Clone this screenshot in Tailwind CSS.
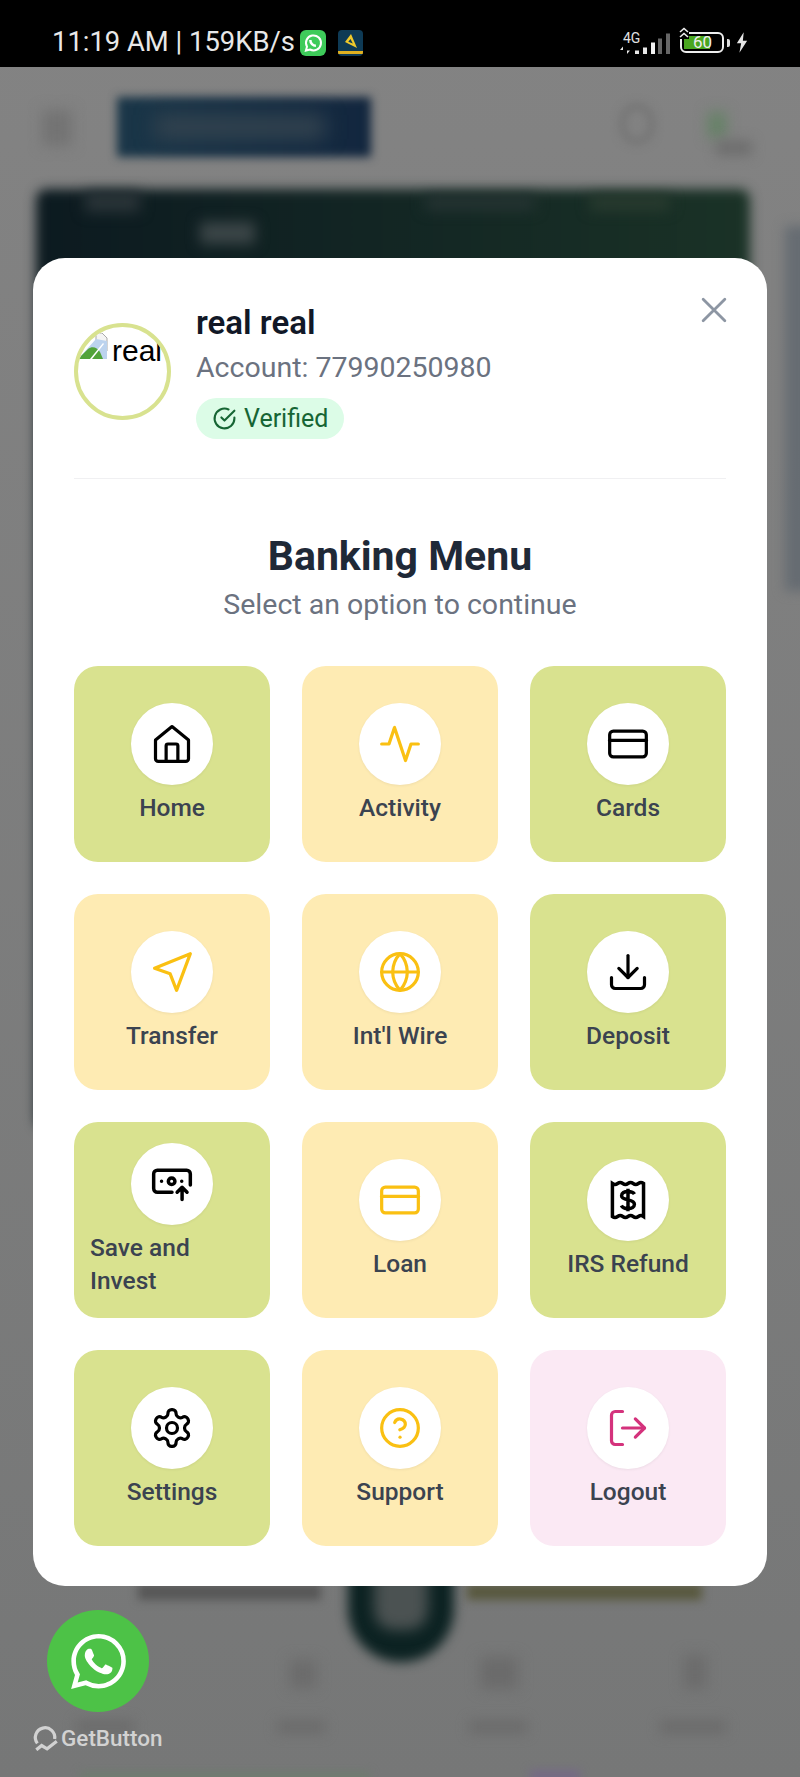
<!DOCTYPE html>
<html lang="en">
<head>
    <meta charset="UTF-8">
    <meta name="viewport" content="width=device-width, initial-scale=1.0">
    <title>Banking Menu</title>
    <script src="https://cdn.jsdelivr.net/npm/@tailwindcss/browser@4"></script>
</head>
<body class="bg-[#808080] font-['Roboto',sans-serif]">
<div class="relative w-[800px] h-[1777px] overflow-hidden bg-gradient-to-b from-[#838383] to-[#767777]">

    <!-- Blurred page behind the modal -->
    <div class="absolute left-[42px] top-[110px] w-[30px] h-[36px] bg-[#737373] blur-[7px]"></div>
    <div class="absolute left-[117px] top-[97px] w-[254px] h-[60px] bg-gradient-to-r from-[#1a3648] to-[#12263e] blur-[5px]"></div>
    <div class="absolute left-[155px] top-[115px] w-[170px] h-[24px] bg-[#33434f] blur-[10px]"></div>
    <div class="absolute left-[620px] top-[104px] w-[34px] h-[40px] rounded-full border-[5px] border-[#707070] blur-[5px]"></div>
    <div class="absolute left-[708px] top-[112px] w-[18px] h-[26px] bg-[#658266] blur-[7px]"></div>
    <div class="absolute left-[716px] top-[140px] w-[36px] h-[16px] bg-[#6f6f6f] blur-[6px]"></div>
    <div class="absolute left-[36px] top-[189px] w-[714px] h-[940px] rounded-[10px] bg-gradient-to-r from-[#0c1a20] to-[#1a3226] blur-[6px]"></div>
    <div class="absolute left-[85px] top-[192px] w-[55px] h-[20px] bg-[#2a3438] blur-[7px]"></div>
    <div class="absolute left-[200px] top-[222px] w-[55px] h-[22px] bg-[#3c4648] blur-[7px]"></div>
    <div class="absolute left-[425px] top-[196px] w-[110px] h-[14px] bg-[#263433] blur-[7px]"></div>
    <div class="absolute left-[590px] top-[196px] w-[80px] h-[14px] bg-[#2a3c30] blur-[7px]"></div>
    <div class="absolute left-[785px] top-[226px] w-[30px] h-[365px] bg-[#666c72] blur-[6px]"></div>
    <div class="absolute left-[348px] top-[1500px] w-[106px] h-[162px] rounded-full bg-[#0c2222] blur-[6px]"></div>
    <div class="absolute left-[374px] top-[1560px] w-[54px] h-[70px] rounded-[20px] bg-[#4b5252] blur-[7px]"></div>
    <div class="absolute left-[138px] top-[1584px] w-[183px] h-[16px] bg-[#565656] blur-[5px]"></div>
    <div class="absolute left-[467px] top-[1584px] w-[235px] h-[16px] bg-[#58583e] blur-[5px]"></div>
    <div class="absolute left-[290px] top-[1660px] w-[26px] h-[28px] bg-[#6b6b6b] blur-[7px]"></div>
    <div class="absolute left-[480px] top-[1657px] w-[38px] h-[32px] bg-[#6b6b6b] blur-[7px]"></div>
    <div class="absolute left-[684px] top-[1655px] w-[22px] h-[34px] bg-[#6b6b6b] blur-[7px]"></div>
    <div class="absolute left-[76px] top-[1720px] w-[58px] h-[14px] bg-[#6c6c6c] blur-[6px]"></div>
    <div class="absolute left-[277px] top-[1720px] w-[48px] h-[14px] bg-[#6c6c6c] blur-[6px]"></div>
    <div class="absolute left-[469px] top-[1720px] w-[58px] h-[14px] bg-[#6c6c6c] blur-[6px]"></div>
    <div class="absolute left-[660px] top-[1720px] w-[66px] h-[14px] bg-[#6c6c6c] blur-[6px]"></div>
    <div class="absolute left-[80px] top-[1772px] w-[290px] h-[10px] bg-[#6f7c6f] blur-[4px]"></div>
    <div class="absolute left-[530px] top-[1770px] w-[50px] h-[12px] bg-[#756a85] blur-[4px]"></div>

    <!-- Status bar -->
    <div class="relative flex items-center justify-between h-[67px] bg-black pl-[52px] pr-[52px] pt-[18px]">
        <div class="flex items-center text-[#e8e8e8] text-[27.400px] leading-none">
            <span>11:19 AM | 159KB/s</span>
            <span class="flex items-center justify-center w-[26px] h-[26px] ml-[5px] rounded-[6px] bg-[#3ecb5a]">
                <svg viewBox="0 0 24 24" class="w-[20px] h-[20px]" fill="none" stroke="#fff" stroke-width="2.400"><path d="M3.500 21l1.300-4.600A9 9 0 1 1 8.300 19.800z"/><path d="M8.800 8.500c0 3.700 3 6.700 6.700 6.700" stroke-width="3"/></svg>
            </span>
            <span class="w-[25px] h-[26px] ml-[12px] rounded-[4px] bg-[#0e3a55] overflow-hidden">
                <svg viewBox="0 0 25 26" class="w-[25px] h-[26px]"><path d="M13 4l6 14-12-6z" fill="#f0c92a"/><path d="M12.500 9l2.300 4.500-4.500-1.800z" fill="#0e3a55"/><rect x="0" y="21" width="25" height="3" fill="#e0b020"/></svg>
            </span>
        </div>
        <div class="flex items-center">
            <div class="relative w-[50px] h-[24px] mr-[10px]">
                <span class="absolute left-[3px] top-0 text-[14px] leading-none text-[#e0e0e0]">4G</span>
                <svg viewBox="0 0 50 24" class="absolute inset-0 w-[50px] h-[24px]">
                    <path d="M3 23v-4H0l3-3.500zM7 15.500v4h3l-3 3.500z" fill="#e8e8e8"/>
                    <rect x="15" y="19.500" width="4" height="3.500" fill="#e8e8e8"/>
                    <rect x="23" y="16.500" width="4" height="6.500" fill="#e8e8e8"/>
                    <rect x="31" y="11.500" width="4" height="11.500" fill="#f2f2f2"/>
                    <rect x="38" y="7.500" width="4" height="15.500" fill="#666"/>
                    <rect x="46" y="2.500" width="4" height="20.500" fill="#666"/>
                </svg>
            </div>
            <div class="relative w-[44px] h-[21px] rounded-[6px] border-2 border-[#eee]">
                <div class="absolute left-[2px] top-[2px] w-[26px] h-[13px] bg-[#4aa61f]"></div>
                <span class="absolute left-[11px] top-[0px] text-[17px] leading-[17px] text-[#eee]">60</span>
                <svg viewBox="0 0 10 12" class="absolute -left-[3px] -top-[7px] w-[10px] h-[12px] bg-black" fill="none" stroke="#eee" stroke-width="1.600"><path d="M1 5l4-3.500L9 5M1 10l4-3.500L9 10"/></svg>
            </div>
            <span class="w-[3px] h-[8px] ml-[3px] bg-[#ddd] rounded-r-[2px]"></span>
            <svg viewBox="0 0 14 24" class="w-[12px] h-[21px] ml-[6px]"><path d="M9 0L1 13h5l-2 11 9-14H8z" fill="#e6e6e6"/></svg>
        </div>
    </div>

    <!-- Modal -->
    <div class="absolute left-[33px] top-[258px] w-[734px] h-[1328px] rounded-[32px] bg-white px-[41px] pt-[36px]">
        <button class="absolute right-[40px] top-[39px] text-[#8d96a3]">
            <svg viewBox="0 0 24 24" class="w-[26px] h-[26px]" fill="none" stroke="currentColor" stroke-width="2.600" stroke-linecap="round"><path d="M2 2l20 20M22 2L2 22"/></svg>
        </button>

        <!-- Profile -->
        <div class="flex h-[149px] border-b border-[#f0f0f2] box-content pb-[35px]">
            <div class="w-[97px] h-[97px] mt-[29px] rounded-full border-[4px] border-[#d8e28f] overflow-hidden shrink-0">
                <div class="flex items-start w-[120px] pt-[6px] text-[30px] leading-[34px] text-black font-['Liberation_Sans',sans-serif]">
                    <svg viewBox="0 0 32 26" class="w-[32px] h-[26px] shrink-0"><path d="M18 0h6l5 5v13h-11z" fill="#f4f4f4" stroke="#a9a9a9"/><path d="M0 26l18-20 11 2v18z" fill="#bcd3ee"/><path d="M0 26l10-10c4-3 9-2 12 3l3 7z" fill="#52a33a"/><path d="M12 26l13-16 1 1-12 15z" fill="#fff"/></svg>
                    <span class="ml-[2px] mt-[1px]">real</span>
                </div>
            </div>
            <div class="ml-[25px]">
                <h2 class="text-[33px] leading-[36px] mt-[11px] font-semibold text-[#111827]">real real</h2>
                <p class="text-[28.500px] leading-[36px] mt-[9px] text-[#6b7280]">Account: 77990250980</p>
                <span class="inline-flex items-center h-[41px] mt-[12px] pl-[16px] pr-[16px] rounded-full bg-[#dcfce7] text-[#166534] text-[25px]">
                    <svg viewBox="0 0 24 24" class="w-[25px] h-[25px] mr-[7px]" fill="none" stroke="currentColor" stroke-width="2" stroke-linecap="round" stroke-linejoin="round"><path d="M21.500 11.100V12a9.500 9.500 0 1 1-5.600-8.700"/><path d="M21.500 4.500L12 14l-3-3"/></svg>
                    Verified
                </span>
            </div>
        </div>

        <!-- Title -->
        <h1 class="mt-[53px] text-center text-[41px] leading-[48px] font-bold text-[#1f2937]">Banking Menu</h1>
        <p class="mt-[7px] text-center text-[28.500px] leading-[36px] text-[#6b7280]">Select an option to continue</p>

        <!-- Menu grid -->
        <div class="grid grid-cols-3 gap-[32px] mt-[43px] w-[652px]">
            <a class="flex flex-col items-center h-[196px] rounded-[24px] bg-[#d9e28f] pt-[37px]">
                <span class="flex items-center justify-center w-[82px] h-[82px] rounded-full bg-white shadow-[0_1px_3px_rgba(0,0,0,0.06)] text-black">
                    <svg viewBox="0 0 24 24" class="w-[44px] h-[44px]" fill="none" stroke="currentColor" stroke-width="1.750" stroke-linecap="round" stroke-linejoin="round"><path d="M12 2.500L21 9.800V20a1.500 1.500 0 0 1-1.500 1.500h-15A1.500 1.500 0 0 1 3 20V9.800z"/><path d="M8.800 21.500V13a1 1 0 0 1 1-1h4.400a1 1 0 0 1 1 1v8.500"/></svg>
                </span>
                <span class="mt-[5px] text-[24.500px] leading-[36px] font-medium text-[#3b4350]">Home</span>
            </a>
            <a class="flex flex-col items-center h-[196px] rounded-[24px] bg-[#feebb3] pt-[37px]">
                <span class="flex items-center justify-center w-[82px] h-[82px] rounded-full bg-white shadow-[0_1px_3px_rgba(0,0,0,0.06)] text-[#fac012]">
                    <svg viewBox="0 0 24 24" class="w-[44px] h-[44px]" fill="none" stroke="currentColor" stroke-width="1.750" stroke-linecap="round" stroke-linejoin="round"><path d="M22 12h-4l-3 9L9 3l-3 9H2"/></svg>
                </span>
                <span class="mt-[5px] text-[24.500px] leading-[36px] font-medium text-[#3b4350]">Activity</span>
            </a>
            <a class="flex flex-col items-center h-[196px] rounded-[24px] bg-[#d9e28f] pt-[37px]">
                <span class="flex items-center justify-center w-[82px] h-[82px] rounded-full bg-white shadow-[0_1px_3px_rgba(0,0,0,0.06)] text-black">
                    <svg viewBox="0 0 24 24" class="w-[44px] h-[44px]" fill="none" stroke="currentColor" stroke-width="1.750" stroke-linecap="round" stroke-linejoin="round"><rect x="2" y="5" width="20" height="14" rx="2"/><path d="M2 10h20"/></svg>
                </span>
                <span class="mt-[5px] text-[24.500px] leading-[36px] font-medium text-[#3b4350]">Cards</span>
            </a>
            <a class="flex flex-col items-center h-[196px] rounded-[24px] bg-[#feebb3] pt-[37px]">
                <span class="flex items-center justify-center w-[82px] h-[82px] rounded-full bg-white shadow-[0_1px_3px_rgba(0,0,0,0.06)] text-[#fac012]">
                    <svg viewBox="0 0 24 24" class="w-[44px] h-[44px]" fill="none" stroke="currentColor" stroke-width="1.750" stroke-linecap="round" stroke-linejoin="round"><path d="M22 2L2.500 10l8.500 3 3.500 9z"/></svg>
                </span>
                <span class="mt-[5px] text-[24.500px] leading-[36px] font-medium text-[#3b4350]">Transfer</span>
            </a>
            <a class="flex flex-col items-center h-[196px] rounded-[24px] bg-[#feebb3] pt-[37px]">
                <span class="flex items-center justify-center w-[82px] h-[82px] rounded-full bg-white shadow-[0_1px_3px_rgba(0,0,0,0.06)] text-[#fac012]">
                    <svg viewBox="0 0 24 24" class="w-[44px] h-[44px]" fill="none" stroke="currentColor" stroke-width="1.750" stroke-linecap="round" stroke-linejoin="round"><circle cx="12" cy="12" r="10"/><path d="M2 12h20"/><path d="M12 2a15.300 15.300 0 0 1 4 10 15.300 15.300 0 0 1-4 10 15.300 15.300 0 0 1-4-10 15.300 15.300 0 0 1 4-10z"/></svg>
                </span>
                <span class="mt-[5px] text-[24.500px] leading-[36px] font-medium text-[#3b4350]">Int'l Wire</span>
            </a>
            <a class="flex flex-col items-center h-[196px] rounded-[24px] bg-[#d9e28f] pt-[37px]">
                <span class="flex items-center justify-center w-[82px] h-[82px] rounded-full bg-white shadow-[0_1px_3px_rgba(0,0,0,0.06)] text-black">
                    <svg viewBox="0 0 24 24" class="w-[44px] h-[44px]" fill="none" stroke="currentColor" stroke-width="1.750" stroke-linecap="round" stroke-linejoin="round"><path d="M21 15v4a2 2 0 0 1-2 2H5a2 2 0 0 1-2-2v-4"/><path d="M7 10l5 5 5-5"/><path d="M12 15V3"/></svg>
                </span>
                <span class="mt-[5px] text-[24.500px] leading-[36px] font-medium text-[#3b4350]">Deposit</span>
            </a>
            <a class="flex flex-col h-[196px] rounded-[24px] bg-[#d9e28f] pt-[21px] px-[16px]">
                <span class="flex items-center justify-center self-center w-[82px] h-[82px] rounded-full bg-white shadow-[0_1px_3px_rgba(0,0,0,0.06)] text-black">
                    <svg viewBox="0 0 24 24" class="w-[44px] h-[44px]" fill="none" stroke="currentColor" stroke-width="1.900" stroke-linecap="round" stroke-linejoin="round"><path d="M12 16.500H4a2 2 0 0 1-2-2v-8a2 2 0 0 1 2-2h16a2 2 0 0 1 2 2v6"/><circle cx="11.800" cy="10.500" r="1.800"/><path d="M6.300 10.500h.01M17.300 10.500h.01"/><path d="M17.500 20.500v-6.500M14.800 16.500l2.700-2.700 2.700 2.700"/></svg>
                </span>
                <span class="mt-[6px] text-[24.500px] leading-[33px] font-medium text-[#3b4350]">Save and Invest</span>
            </a>
            <a class="flex flex-col items-center h-[196px] rounded-[24px] bg-[#feebb3] pt-[37px]">
                <span class="flex items-center justify-center w-[82px] h-[82px] rounded-full bg-white shadow-[0_1px_3px_rgba(0,0,0,0.06)] text-[#fac012]">
                    <svg viewBox="0 0 24 24" class="w-[44px] h-[44px]" fill="none" stroke="currentColor" stroke-width="1.750" stroke-linecap="round" stroke-linejoin="round"><rect x="2" y="5" width="20" height="14" rx="2"/><path d="M2 10h20"/></svg>
                </span>
                <span class="mt-[5px] text-[24.500px] leading-[36px] font-medium text-[#3b4350]">Loan</span>
            </a>
            <a class="flex flex-col items-center h-[196px] rounded-[24px] bg-[#d9e28f] pt-[37px]">
                <span class="flex items-center justify-center w-[82px] h-[82px] rounded-full bg-white shadow-[0_1px_3px_rgba(0,0,0,0.06)] text-black">
                    <svg viewBox="0 0 24 24" class="w-[44px] h-[44px]" fill="none" stroke="currentColor" stroke-width="1.900"><path d="M3.500 3q1.420 1 2.830 0t2.830 0 2.830 0 2.830 0 2.830 0 2.830 0V21q-1.420-1-2.830 0t-2.830 0-2.830 0-2.830 0-2.830 0-2.830 0z"/><path d="M15.500 8.800c-.5-1-1.700-1.500-3.500-1.500-2 0-3.500.9-3.500 2.400 0 3 7 1.500 7 4.600 0 1.500-1.500 2.400-3.500 2.400-1.800 0-3.100-.6-3.600-1.700M12 5.800v12.400"/></svg>
                </span>
                <span class="mt-[5px] text-[24.500px] leading-[36px] font-medium text-[#3b4350]">IRS Refund</span>
            </a>
            <a class="flex flex-col items-center h-[196px] rounded-[24px] bg-[#d9e28f] pt-[37px]">
                <span class="flex items-center justify-center w-[82px] h-[82px] rounded-full bg-white shadow-[0_1px_3px_rgba(0,0,0,0.06)] text-black">
                    <svg viewBox="0 0 24 24" class="w-[44px] h-[44px]" fill="none" stroke="currentColor" stroke-width="1.750" stroke-linecap="round" stroke-linejoin="round"><path d="M12.220 2h-.44a2 2 0 0 0-2 2v.18a2 2 0 0 1-1 1.730l-.43.25a2 2 0 0 1-2 0l-.15-.08a2 2 0 0 0-2.730.73l-.22.38a2 2 0 0 0 .73 2.730l.15.1a2 2 0 0 1 1 1.720v.51a2 2 0 0 1-1 1.740l-.15.09a2 2 0 0 0-.73 2.730l.22.38a2 2 0 0 0 2.730.73l.15-.08a2 2 0 0 1 2 0l.43.25a2 2 0 0 1 1 1.730V20a2 2 0 0 0 2 2h.44a2 2 0 0 0 2-2v-.18a2 2 0 0 1 1-1.730l.43-.25a2 2 0 0 1 2 0l.15.08a2 2 0 0 0 2.730-.73l.22-.39a2 2 0 0 0-.73-2.730l-.15-.08a2 2 0 0 1-1-1.740v-.5a2 2 0 0 1 1-1.740l.15-.09a2 2 0 0 0 .73-2.730l-.22-.38a2 2 0 0 0-2.730-.73l-.15.08a2 2 0 0 1-2 0l-.43-.25a2 2 0 0 1-1-1.730V4a2 2 0 0 0-2-2z"/><circle cx="12" cy="12" r="3"/></svg>
                </span>
                <span class="mt-[5px] text-[24.500px] leading-[36px] font-medium text-[#3b4350]">Settings</span>
            </a>
            <a class="flex flex-col items-center h-[196px] rounded-[24px] bg-[#feebb3] pt-[37px]">
                <span class="flex items-center justify-center w-[82px] h-[82px] rounded-full bg-white shadow-[0_1px_3px_rgba(0,0,0,0.06)] text-[#fac012]">
                    <svg viewBox="0 0 24 24" class="w-[44px] h-[44px]" fill="none" stroke="currentColor" stroke-width="1.750" stroke-linecap="round" stroke-linejoin="round"><circle cx="12" cy="12" r="10"/><path d="M9.100 9a3 3 0 0 1 5.800 1c0 2-3 3-3 3"/><path d="M12 17h.01"/></svg>
                </span>
                <span class="mt-[5px] text-[24.500px] leading-[36px] font-medium text-[#3b4350]">Support</span>
            </a>
            <a class="flex flex-col items-center h-[196px] rounded-[24px] bg-[#fbe9f4] pt-[37px]">
                <span class="flex items-center justify-center w-[82px] h-[82px] rounded-full bg-white shadow-[0_1px_3px_rgba(0,0,0,0.06)] text-[#d4327c]">
                    <svg viewBox="0 0 24 24" class="w-[44px] h-[44px]" fill="none" stroke="currentColor" stroke-width="1.750" stroke-linecap="round" stroke-linejoin="round"><path d="M9 21H5a2 2 0 0 1-2-2V5a2 2 0 0 1 2-2h4"/><path d="M16 17l5-5-5-5"/><path d="M21 12H9"/></svg>
                </span>
                <span class="mt-[5px] text-[24.500px] leading-[36px] font-medium text-[#3b4350]">Logout</span>
            </a>
        </div>
    </div>

    <!-- WhatsApp floating widget -->
    <div class="absolute left-[47px] top-[1610px] flex items-center justify-center w-[102px] h-[102px] rounded-full bg-[#4dc247]">
        <svg viewBox="0 0 24 24" class="w-[55px] h-[55px]" fill="#fff"><path d="M17.472 14.382c-.297-.149-1.758-.867-2.030-.967-.273-.099-.471-.148-.670.150-.197.297-.767.966-.940 1.164-.173.199-.347.223-.644.075-.297-.150-1.255-.463-2.390-1.475-.883-.788-1.480-1.761-1.653-2.059-.173-.297-.018-.458.130-.606.134-.133.298-.347.446-.520.149-.174.198-.298.298-.497.099-.198.050-.371-.025-.520-.075-.149-.669-1.612-.916-2.207-.242-.579-.487-.500-.669-.510-.173-.008-.371-.010-.570-.010-.198 0-.520.074-.792.372-.272.297-1.040 1.016-1.040 2.479 0 1.462 1.065 2.875 1.213 3.074.149.198 2.096 3.200 5.077 4.487.709.306 1.262.489 1.694.625.712.227 1.360.195 1.871.118.571-.085 1.758-.719 2.006-1.413.248-.694.248-1.289.173-1.413-.074-.124-.272-.198-.570-.347m-5.421 7.403h-.004a9.870 9.870 0 01-5.031-1.378l-.361-.214-3.741.982.998-3.648-.235-.374a9.860 9.860 0 01-1.510-5.260c.001-5.450 4.436-9.884 9.888-9.884 2.640 0 5.122 1.030 6.988 2.898a9.825 9.825 0 012.893 6.994c-.003 5.450-4.437 9.884-9.885 9.884m8.413-18.297A11.815 11.815 0 0012.050 0C5.495 0 .160 5.335.157 11.892c0 2.096.547 4.142 1.588 5.945L.057 24l6.305-1.654a11.882 11.882 0 005.683 1.448h.005c6.554 0 11.890-5.335 11.893-11.893a11.821 11.821 0 00-3.480-8.413z"/></svg>
    </div>
    <div class="absolute left-[32px] top-[1725px] flex items-center text-[#d2d2d2]">
        <svg viewBox="0 0 26 24" class="w-[28px] h-[26px]" fill="none" stroke="currentColor" stroke-width="3"><path d="M5 17A9 9 0 1 1 21 13"/><path d="M4 23l5-4 5 3 9-7"/></svg>
        <span class="ml-[1px] text-[22.500px] leading-none font-medium font-['Roboto',sans-serif]">GetButton</span>
    </div>
</div>
</body>
</html>
